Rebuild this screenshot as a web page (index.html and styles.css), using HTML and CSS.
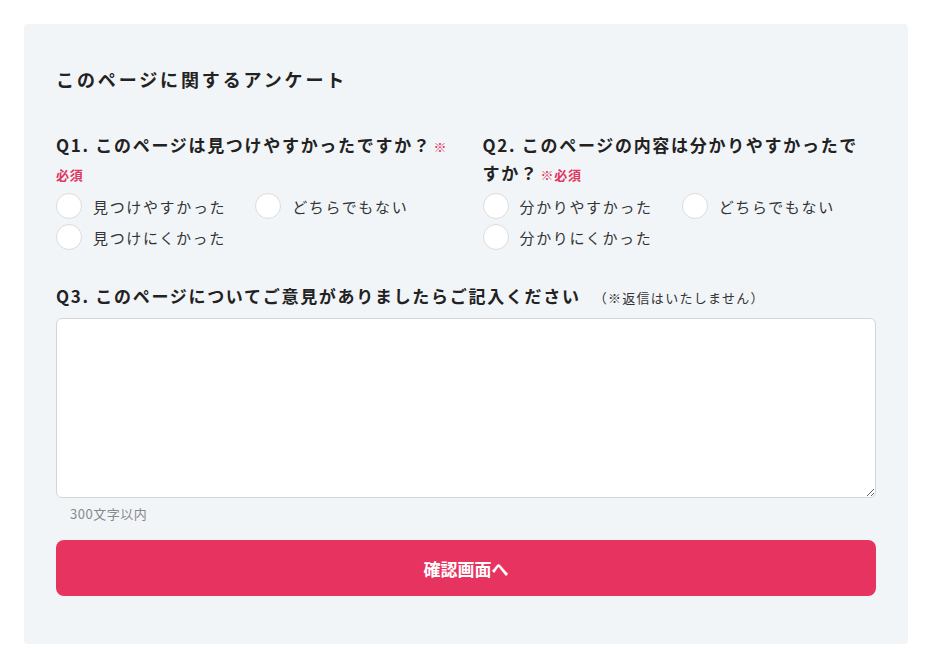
FILE: index.html
```html
<!DOCTYPE html>
<html lang="ja">
    <head>
        <meta charset="UTF-8">
        <meta name="viewport" content="width=device-width, initial-scale=1.0">
        <title>このページに関するアンケート</title>
        <link rel="stylesheet" href="styles.css">
    </head>
    <body>
        <form class="survey">
            <h2 class="survey-title">このページに関するアンケート</h2>

            <div class="questions">
                <div class="question">
                    <h3 class="question-title">Q1. このページは見つけやすかったですか？<span class="required">※必須</span></h3>
                    <div class="options">
                        <label class="option"><input type="radio" name="q1" value="1"><span>見つけやすかった</span></label>
                        <label class="option"><input type="radio" name="q1" value="2"><span>どちらでもない</span></label>
                        <label class="option"><input type="radio" name="q1" value="3"><span>見つけにくかった</span></label>
                    </div>
                </div>
                <div class="question">
                    <h3 class="question-title">Q2. このページの内容は分かりやすかったですか？<span class="required">※必須</span></h3>
                    <div class="options">
                        <label class="option"><input type="radio" name="q2" value="1"><span>分かりやすかった</span></label>
                        <label class="option"><input type="radio" name="q2" value="2"><span>どちらでもない</span></label>
                        <label class="option"><input type="radio" name="q2" value="3"><span>分かりにくかった</span></label>
                    </div>
                </div>
            </div>

            <h3 class="question-title comment-title">Q3. このページについてご意見がありましたらご記入ください<span class="note">（※返信はいたしません）</span></h3>
            <textarea class="comment" name="comment" maxlength="300"></textarea>
            <p class="limit">300文字以内</p>

            <button type="submit" class="submit">確認画面へ</button>
        </form>
    </body>
</html>
```

FILE: styles.css
```css
* {
    box-sizing: border-box;
}

body {
    margin: 0;
    background-color: #fff;
    font-family: "Noto Sans CJK JP", "Noto Sans", sans-serif;
    color: #222;
}

.survey {
    width: 884px;
    margin: 24px;
    padding: 41px 32px 48px;
    background-color: #f2f5f8;
    border-radius: 4px;
}

.survey-title {
    margin: 0;
    font-size: 18px;
    line-height: 28px;
    letter-spacing: 0.16em;
    font-weight: 700;
    color: #222;
}

.questions {
    display: grid;
    grid-template-columns: 1fr 1fr;
    column-gap: 33px;
    margin-top: 38px;
}

.question-title {
    margin: 0;
    font-size: 17px;
    line-height: 28px;
    letter-spacing: 0.1em;
    font-weight: 700;
    color: #222;
}

.required {
    margin-left: 2px;
    font-size: 13px;
    line-height: 20px;
    letter-spacing: 0.05em;
    color: #e0365f;
}

.options {
    display: flex;
    flex-wrap: wrap;
    row-gap: 5px;
    margin-top: 6px;
}

.option {
    display: flex;
    align-items: center;
    height: 26px;
    margin-right: 29px;
    font-size: 15px;
    letter-spacing: 0.11em;
    color: #333;
    cursor: pointer;
}

.option input {
    appearance: none;
    width: 26px;
    height: 26px;
    margin: 0 11px 0 0;
    background-color: #fff;
    border: 1px solid #dcdcdc;
    border-radius: 50%;
}

.option input:checked {
    border: 7px solid #e6335f;
}

.comment-title {
    margin-top: 32px;
}

.note {
    margin-left: 13px;
    font-size: 13px;
    line-height: 20px;
    font-weight: 400;
    letter-spacing: 0.1em;
    color: #333;
}

.comment {
    display: block;
    width: 100%;
    height: 180px;
    margin-top: 8px;
    padding: 10px 12px;
    background-color: #fff;
    border: 1px solid #d5d5d5;
    border-radius: 6px;
    font-family: inherit;
    font-size: 15px;
}

.limit {
    margin: 6px 0 0 14px;
    font-size: 13px;
    line-height: 20px;
    letter-spacing: 0.04em;
    color: #888;
}

.submit {
    display: block;
    width: 100%;
    height: 56px;
    margin-top: 16px;
    background-color: #e6335f;
    border: none;
    border-radius: 8px;
    font-family: inherit;
    font-size: 17px;
    font-weight: 700;
    color: #fff;
    cursor: pointer;
}
```
